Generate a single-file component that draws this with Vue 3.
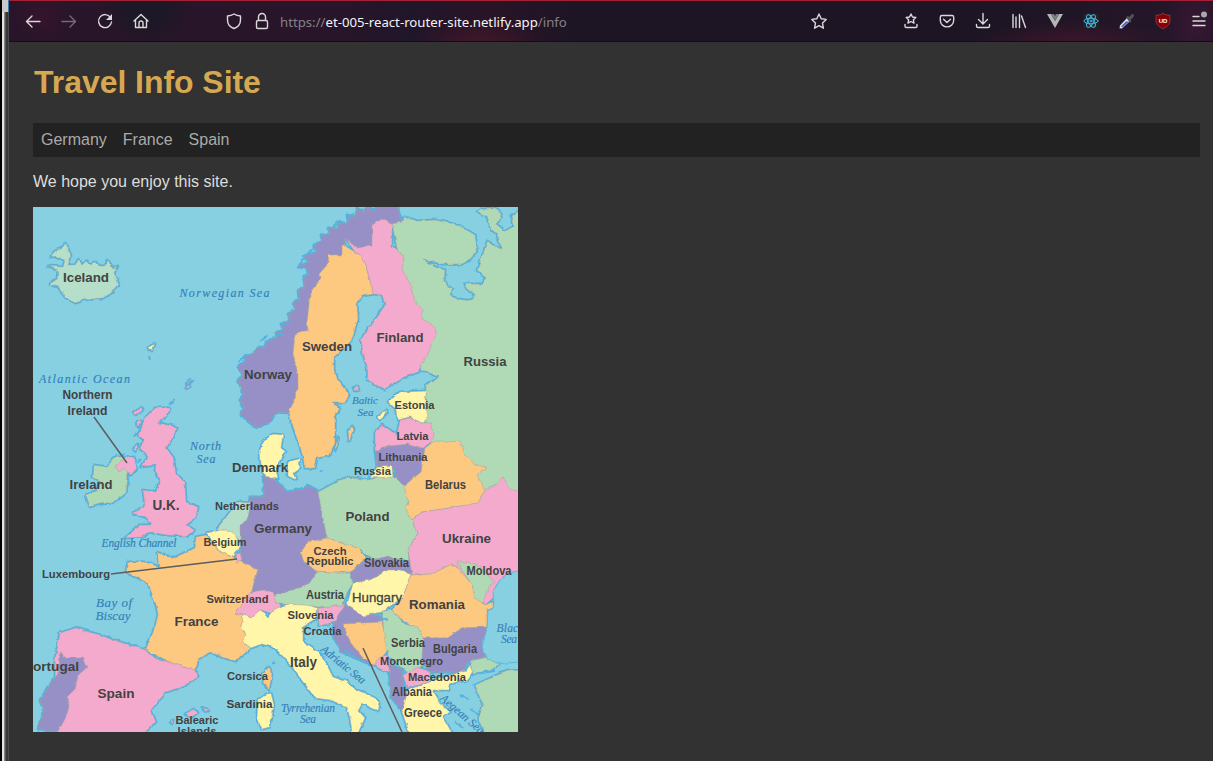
<script setup>
const sea = '#87d0e2'
const green = '#afdab5'
const mint = '#b5dfc8'
const pink = '#f3aacc'
const violet = '#9690c7'
const orange = '#fdc981'
const yellow = '#fff6aa'

const lands = [
  { c: green, p: '392,224 392,220 403,221 404,217 418,221 435,220 450,223 462,227 475,235 477,247 472,259 462,264 442,264 422,259 435,267 445,270 444,282 452,290 450,296 458,299 472,301 475,294 467,290 465,284 482,284 487,278 477,270 482,257 487,242 502,250 497,234 492,230 487,217 477,212 480,209 498,209 502,217 496,224 505,231 514,227 512,215 524,208 524,500 460,510 425,430 426,385 440,377 422,370' },
  { c: violet, p: '398,200 398,210 402,222 392,224 380,220 373,228 372,246 357,248 346,239 342,255 329,255 328,264 319,274 320,279 310,295 307,322 308,330 295,335 293,354 298,374 298,390 289,413 278,412 266,425 255,427 241,415 244,408 240,400 244,395 241,387 238,380 243,375 238,367 246,361 244,357 254,354 258,348 265,347 266,342 278,337 276,333 284,330 281,324 290,320 288,314 295,310 294,303 300,300 299,291 305,286 303,278 309,274 308,268 298,267 309,262 304,256 318,252 314,245 323,241 321,235 331,234 328,228 339,229 338,222 348,224 347,215 355,217 358,208 364,213 368,206 375,212 379,200' },
  { c: orange, p: '342,244 342,255 329,255 328,264 319,274 320,279 310,295 307,322 308,330 295,335 293,354 298,374 298,390 289,413 295,433 302,453 305,468 315,468 317,458 330,455 335,443 335,417 340,408 332,403 345,403 349,395 338,380 334,370 334,357 345,347 352,340 358,319 357,304 362,296 374,294 369,277 363,259 355,252' },
  { c: pink, p: '382,219 392,224 392,246 404,257 402,270 412,287 413,299 423,310 422,318 435,327 436,334 428,354 418,372 405,377 395,383 385,389 376,385 368,380 367,366 363,354 361,340 375,320 385,305 382,295 374,294 369,277 363,259 355,252 346,239 357,248 372,246 372,225' },
  { c: mint, p: '65,244 68,248 71,257 68,265 75,265 79,259 82,265 86,261 91,266 94,262 100,266 105,266 108,260 113,269 118,266 114,273 119,284 113,292 103,298 83,300 75,303 65,297 58,287 50,284 57,279 58,270 48,266 63,267 65,260 51,256 55,251 61,249' },
  { c: pink, p: '155,408 170,408 168,414 158,423 177,427 174,436 166,448 173,457 176,473 185,483 186,502 198,507 196,518 186,525 195,530 188,536 166,535 150,532 143,537 125,538 140,525 151,525 147,518 133,513 145,507 143,490 156,492 160,480 155,470 156,465 141,467 148,457 140,448 144,440 138,435 146,417' },
  { c: green, p: '113,458 123,455 128,477 126,493 113,503 100,504 90,507 86,495 96,491 101,482 93,477 94,465 108,467' },
  { c: pink, p: '115,467 125,458 134,457 137,468 131,475 123,468 120,472' },
  { c: yellow, p: '264,440 274,434 283,435 281,448 286,452 280,460 276,470 278,479 266,478 261,465 260,450' },
  { c: yellow, p: '288,462 299,459 300,468 293,473 296,480 288,476' },
  { c: violet, p: '263,477 275,480 287,492 298,490 310,486 318,492 322,513 327,538 308,542 301,552 303,558 317,572 308,585 297,593 275,595 251,592 258,570 241,562 240,537 240,527 248,517 250,497 265,497' },
  { c: mint, p: '216,530 230,512 238,502 251,503 248,517 240,527 240,540 228,531' },
  { c: yellow, p: '206,533 222,530 233,532 240,543 237,552 233,557 220,552' },
  { c: orange, p: '196,537 206,535 220,552 233,557 241,562 258,570 251,592 246,600 235,613 243,615 241,627 246,635 243,642 251,648 236,661 225,658 210,652 198,660 196,670 183,667 170,662 146,650 155,627 158,615 156,605 148,583 126,572 128,562 145,562 160,567 158,552 167,557 176,557 195,548' },
  { c: pink, p: '236,555 240,553 242,560 237,563' },
  { c: pink, p: '60,633 76,628 100,635 120,642 146,650 157,660 170,662 183,667 196,670 198,677 183,687 166,692 151,710 156,722 142,735 56,735 55,660' },
  { c: violet, p: '60,653 66,658 83,658 88,667 78,675 75,690 68,697 69,707 66,717 58,732 38,729 44,712 40,700 50,685 59,672' },
  { c: pink, p: '251,592 264,590 273,592 276,600 281,607 270,613 261,610 252,618 243,615 235,613' },
  { c: yellow, p: '243,615 252,618 261,610 268,618 275,609 285,605 298,601 318,608 316,619 303,627 303,642 322,655 333,677 348,682 353,688 375,698 380,703 378,711 362,703 358,710 365,718 357,735 352,733 350,718 347,708 330,700 315,698 300,678 290,664 275,648 262,644 251,648 243,642 246,635 241,627' },
  { c: green, p: '274,596 308,585 317,572 333,573 350,573 353,583 347,593 343,605 325,608 305,605 276,604' },
  { c: pink, p: '318,608 330,607 345,605 343,615 335,622 319,626' },
  { c: violet, p: '345,605 363,614 380,616 383,624 343,623 350,642 375,666 358,659 342,652 332,634 335,622' },
  { c: orange, p: '343,624 382,622 385,635 388,650 375,666 362,657 350,642' },
  { c: orange, p: '301,552 308,542 327,538 342,543 356,544 366,558 350,572 333,573 317,572 303,560' },
  { c: green, p: '318,492 333,484 347,477 367,480 382,477 402,477 405,485 409,503 412,520 418,533 408,550 409,560 388,558 372,559 360,549 342,543 327,538 322,513' },
  { c: violet, p: '350,573 366,560 375,560 388,556 400,562 410,560 412,575 400,570 388,570 370,580 357,585' },
  { c: yellow, p: '353,583 370,580 388,570 400,570 412,575 402,598 382,612 363,616 347,605' },
  { c: yellow, p: '370,478 377,467 392,466 393,477' },
  { c: violet, p: '375,450 390,446 408,444 425,448 421,472 404,486 397,479 392,466 377,467' },
  { c: pink, p: '375,433 382,425 390,430 397,435 400,420 410,418 422,423 432,423 433,440 422,449 408,444 390,446 375,451' },
  { c: yellow, p: '388,402 400,392 427,391 425,400 428,418 422,423 410,417 398,420 397,410' },
  { c: orange, p: '433,442 447,442 460,441 465,455 475,464 487,468 477,475 485,490 478,503 450,508 422,512 412,520 405,507 409,503 404,486 421,472 425,448' },
  { c: pink, p: '412,520 422,512 450,508 478,503 485,490 496,485 503,477 508,486 512,491 524,492 524,574 508,573 500,580 493,598 485,605 472,585 457,567 452,564 432,574 412,575 408,550 418,533' },
  { c: green, p: '457,562 468,562 482,568 495,583 488,588 482,605 475,598 472,585' },
  { c: orange, p: '412,575 432,574 452,564 459,569 472,585 475,598 485,605 493,602 493,608 487,610 487,628 462,628 448,638 423,638 413,627 400,618 392,610 402,598' },
  { c: green, p: '382,611 392,610 405,624 418,628 423,638 425,648 422,667 408,673 388,655 384,635' },
  { c: violet, p: '423,638 448,638 462,628 487,627 482,647 485,657 468,662 462,672 430,672 422,660' },
  { c: pink, p: '378,658 387,655 391,662 388,673 375,666' },
  { c: violet, p: '389,664 402,670 403,685 407,695 402,711 392,698 390,682' },
  { c: pink, p: '403,675 418,667 430,672 430,682 407,688' },
  { c: yellow, p: '408,690 430,682 450,675 466,671 470,665 474,671 468,680 448,684 450,690 432,690 440,703 450,712 443,717 452,733 410,735 402,712' },
  { c: green, p: '470,661 488,657 500,663 490,671 474,674' },
  { c: green, p: '475,685 495,676 508,671 524,670 524,738 487,738 478,719 483,706' },
  { c: orange, p: '262,674 269,667 272,675 269,690 264,683' },
  { c: yellow, p: '258,699 271,693 274,705 270,727 262,729 257,717' },
  { c: pink, p: '185,714 194,709 198,713 191,718' },
  { c: pink, p: '202,708 207,709 209,712 204,711' },
  { c: pink, p: '170,722 173,720 172,724' },
  { c: pink, p: '134,413 141,407 143,410 136,415' },
  { c: pink, p: '136,422 141,421 138,427' },
  { c: pink, p: '133,448 138,444 136,451' },
  { c: pink, p: '186,389 189,380 190,387' },
  { c: pink, p: '354,388 357,386 359,390 356,391' },
  { c: orange, p: '348,432 352,426 354,430 349,441' },
  { c: yellow, p: '335,450 338,437 337,447' },
  { c: yellow, p: '378,417 387,410 386,415 380,420' },
  { c: yellow, p: '148,348 155,344 152,351' }
]

const blackSea = '524,570 508,573 500,580 493,592 494,603 493,608 488,611 487,628 482,647 488,660 505,664 524,661'

const countries = [
  ['Iceland', 86, 282, 13, 46],
  ['Norway', 268, 379, 13, 48],
  ['Sweden', 327, 351, 13, 50],
  ['Finland', 400, 342, 13, 47],
  ['Russia', 485, 366, 13, 43],
  ['Northern', 87.5, 399, 12.5, 50],
  ['Ireland', 87.5, 414.5, 12.5, 40],
  ['Ireland', 91, 488.5, 13, 43],
  ['U.K.', 166, 510, 14, 27],
  ['Denmark', 260, 472, 13, 56],
  ['Estonia', 414.5, 409, 11, 40],
  ['Latvia', 412.5, 440, 11, 32],
  ['Lithuania', 403, 460.5, 11, 49],
  ['Russia', 372.5, 475, 11, 37],
  ['Belarus', 445.5, 489, 12, 41],
  ['Poland', 367.5, 521, 13.5, 44],
  ['Ukraine', 466.5, 543, 13.5, 49],
  ['Netherlands', 247, 509.5, 11, 64],
  ['Germany', 283, 533, 13, 58],
  ['Belgium', 225, 545.5, 11.5, 43],
  ['Czech', 330, 555, 11, 33],
  ['Republic', 330, 565, 11, 47],
  ['Slovakia', 386.5, 567, 12, 45],
  ['Luxembourg', 76, 577.5, 11.5, 68],
  ['Switzerland', 237.5, 602.5, 11.5, 62],
  ['France', 196.5, 626, 13.5, 44],
  ['Austria', 325, 598.5, 12, 38],
  ['Romania', 437, 608.5, 13.5, 56],
  ['Moldova', 489, 575, 12, 45],
  ['Slovenia', 310.5, 619, 11.5, 46],
  ['Croatia', 322.5, 635, 11.5, 38],
  ['Serbia', 408, 647, 12, 34],
  ['Bulgaria', 455, 653, 12, 44],
  ['Montenegro', 411.5, 665, 11.5, 63],
  ['Macedonia', 437, 680.5, 11.5, 58],
  ['Albania', 412, 696, 12, 40],
  ['Greece', 423, 716.5, 12, 38],
  ['Italy', 303.5, 667, 14, 27],
  ['Spain', 116, 697.5, 13, 37],
  ['Portugal', 51.5, 671, 13, 55],
  ['Corsica', 247.5, 680, 11.5, 41],
  ['Sardinia', 249.5, 707.5, 11.5, 46],
  ['Balearic', 197, 724, 11.5, 43],
  ['Islands', 197, 735, 11.5, 39]
]

const waters = [
  ['Norwegian Sea', 224.5, 297, 12, 90],
  ['Atlantic Ocean', 84.5, 383, 12, 91],
  ['North', 205.5, 449.5, 12, 31],
  ['Sea', 206, 462.5, 12, 19],
  ['Baltic', 365, 404, 11, 26],
  ['Sea', 365.5, 415.5, 11, 16],
  ['English Channel', 139, 546.5, 11.5, 75],
  ['Bay of', 114, 607, 13, 36],
  ['Biscay', 113, 620, 13, 35],
  ['Tyrrehenian', 308, 712, 11.5, 54],
  ['Sea', 308, 722.5, 11.5, 16],
  ['Black', 510, 632, 11.5, 27],
  ['Sea', 509, 643, 11.5, 16]
]
</script>

<template>
  <div class="window">
    <div class="frame"></div>
    <div class="browser">
      <header class="toolbar">
        <span class="btn"><svg viewBox="0 0 20 20"><path d="M17 10.5H4M9 5l-5.500 5.500L9 16" /></svg></span>
        <span class="btn dim"><svg viewBox="0 0 20 20"><path d="M3 10.500h13M11 5l5.500 5.500L11 16" /></svg></span>
        <span class="btn"><svg viewBox="0 0 20 20"><path d="M15.500 6.500A6.500 6.500 0 1 0 16.500 11" /><path class="solid" d="M17 3v6h-6z" /></svg></span>
        <span class="btn"><svg viewBox="0 0 20 20"><path d="M3 10l7-6.500L17 10M4.500 9v7.500h11V9M8 16v-4a2 2 0 0 1 4 0v4" /></svg></span>
        <span class="btn security shield"><svg viewBox="0 0 20 20"><path d="M10 3c2 1.200 4 1.800 6.500 2v4c0 4-3 7.200-6.500 8.500C6.500 16.200 3.500 13 3.500 9V5C6 4.800 8 4.200 10 3z" /></svg></span>
        <span class="btn security"><svg viewBox="0 0 20 20"><rect x="4.500" y="9.500" width="11" height="8" rx="1.500" /><path d="M6.500 9V6a3.500 3.500 0 0 1 7 0v3" /></svg></span>
        <div class="url">https://<b>et-005-react-router-site.netlify.app</b>/info</div>
        <span class="btn"><svg viewBox="0 0 20 20"><path d="M10 3l2.200 4.700 5 .7-3.700 3.600.9 5.200-4.400-2.500-4.400 2.500.9-5.200-3.700-3.600 5-.7z" /></svg></span>
        <div class="tools">
          <span class="btn"><svg viewBox="0 0 20 20"><path d="M10 3l1.500 3 3.300.500-2.400 2.300.6 3.300-3-1.600-3 1.600.6-3.300-2.400-2.300 3.300-.5zM4 13.500v1.800q0 1.200 1.200 1.200h9.600q1.200 0 1.200-1.200v-1.800" /></svg></span>
          <span class="btn"><svg viewBox="0 0 20 20"><path d="M5 4.500h10q1.700 0 1.700 1.700v3a6.700 6.700 0 0 1-13.400 0v-3q0-1.700 1.700-1.700zM6.500 8.300l3.500 3.200 3.500-3.200" /></svg></span>
          <span class="btn"><svg viewBox="0 0 20 20"><path d="M10 2.500v10M5.500 8.500l4.500 4.500 4.500-4.500M3.500 13.500v1.500q0 1.500 1.500 1.500h10q1.500 0 1.500-1.500v-1.500" /></svg></span>
          <span class="btn"><svg viewBox="0 0 20 20"><path d="M4 3.500v13M7 6v10.500M10.500 3.500v13M12.500 5l4 11.500" /></svg></span>
          <span class="btn"><svg viewBox="0 0 20 20" class="flat"><path fill="#b4b6b6" d="M2 3h4l4 7 4-7h4l-8 14z" /><path fill="#7b7d7d" d="M6 3h3l1 2 1-2h3l-4 7z" /></svg></span>
          <span class="btn"><svg viewBox="0 0 20 20" class="react"><rect x="2.500" y="2.500" width="15" height="15" rx="2" class="tile" /><g><ellipse cx="10" cy="10" rx="7" ry="2.800" /><ellipse cx="10" cy="10" rx="7" ry="2.800" transform="rotate(60 10 10)" /><ellipse cx="10" cy="10" rx="7" ry="2.800" transform="rotate(120 10 10)" /><circle cx="10" cy="10" r="1" /></g></svg></span>
          <span class="btn"><svg viewBox="0 0 20 20" class="flat"><path fill="#dedfe4" d="M10 7l3 3-8 7.500-2.500-.3.500-2.700z" /><path fill="#3d65dc" d="M9 10.500h3l-6.500 6-1.500-1z" /><path fill="#505158" d="M9 6l2-1 1 1 3-3q3 0 1.500 3l-3 3 1 1-1.500 2z" /></svg></span>
          <span class="btn"><svg viewBox="0 0 20 20" class="flat"><path fill="#850008" stroke="#a84048" stroke-width=".7" d="M10 2.500c2 1.200 4 1.700 7 1.700v5.300c0 4-3.500 6.500-7 8.500-3.500-2-7-4.500-7-8.500V4.200c3 0 5-.5 7-1.700z" /><text x="10" y="11.700">UD</text></svg></span>
          <span class="btn"><svg viewBox="0 0 20 20"><path d="M4 5.500h6M4 10h12M4 14.500h12" /><circle class="badge" cx="15" cy="3.500" r="3" /></svg></span>
        </div>
      </header>
      <main class="page">
        <h1>Travel Info Site</h1>
        <nav><a>Germany</a><a>France</a><a>Spain</a></nav>
        <p>We hope you enjoy this site.</p>
        <svg class="map" viewBox="33 207 485 525">
          <defs>
            <filter id="coast" filterUnits="userSpaceOnUse" x="15" y="190" width="520" height="560">
              <feTurbulence type="fractalNoise" baseFrequency=".16" numOctaves="2" seed="4" result="noise" />
              <feDisplacementMap in="SourceGraphic" in2="noise" scale="5" xChannelSelector="R" yChannelSelector="G" color-interpolation-filters="sRGB" />
              <feGaussianBlur stdDeviation=".3" />
            </filter>
          </defs>
          <rect x="33" y="207" width="485" height="525" :fill="sea" />
          <g filter="url(#coast)">
            <g transform="translate(1 1)">
              <polygon v-for="(l, i) in lands" :key="'s' + i" class="shore" :points="l.p" />
              <polygon v-for="(l, i) in lands" :key="'l' + i" class="land" :points="l.p" :fill="l.c" />
              <polygon class="inland-sea" :points="blackSea" :fill="sea" />
              <path class="isles" d="M239 362l5-5M260 342l7-6M276 337l8-3M283 326l7-4M298 266l8-8M307 254l9-7M333 227l7-5M349 220l4-7M138 433l-5 4M170 405l5-6M141 459l-3 4M187 386l7-6M149 356l1 4M273 662l2 2M320 471l3 1M484 672l12-1M460 695l9 4M470 709l10 6M455 722l9 6M345 650l18 12M378 616l10 4" />
            </g>
          </g>
          <path class="leader" d="M94 417l33 46M111 574l126-15M363 648l39 84" />
          <text v-for="(t, i) in countries" :key="'c' + i" class="country" :x="t[1]" :y="t[2]" :font-size="t[3]" :textLength="t[4]" lengthAdjust="spacingAndGlyphs">{{ t[0] }}</text>
          <text x="377" y="601.500" class="country plain" font-size="13" textLength="50" lengthAdjust="spacingAndGlyphs">Hungary</text>
          <text v-for="(t, i) in waters" :key="'w' + i" class="water" :x="t[1]" :y="t[2]" :font-size="t[3]" :textLength="t[4]">{{ t[0] }}</text>
          <text class="water" font-size="11.500" textLength="54" transform="translate(341 667.500) rotate(39)">Adriatic Sea</text>
          <text class="water" font-size="11.500" textLength="54" transform="translate(460 717) rotate(41)">Aegean Sea</text>
        </svg>
      </main>
    </div>
  </div>
</template>

<style>
body {
  background: #323232;
  overflow: hidden;
}
</style>

<style scoped>
.window {
  display: flex;
  height: 761px;
  background: #323232;
  font-family: "Liberation Sans", Arial, sans-serif;
}
.frame {
  width: 9px;
  flex: none;
  background:
    linear-gradient(90deg, #000 2px, #c9c9c9 2px 8px, #397caf 8px) 0 0 / 9px 12px no-repeat,
    linear-gradient(90deg, #000 2px, #e2e2e2 2px 4px, #858585 4px 5px, #555 5px 6px, #373737 6px 8px, #4b4b4b 8px);
}
.browser {
  flex: 1;
  min-width: 0;
}
.toolbar {
  box-sizing: border-box;
  height: 42px;
  display: flex;
  align-items: center;
  padding-left: 6px;
  overflow: hidden;
  border-top: 1px solid #a52032;
  border-bottom: 1px solid #130b19;
  background:
    radial-gradient(ellipse 30px 28px at 34px 15px, #35142c, transparent),
    radial-gradient(ellipse 45px 36px at 138px 8px, #1d1825 40%, transparent),
    radial-gradient(ellipse 65px 24px at 470px 42px, #421629, transparent),
    radial-gradient(ellipse 100px 24px at 1065px 43px, #3f152a, transparent),
    radial-gradient(ellipse 30px 45px at 1185px 24px, #381733, transparent),
    linear-gradient(90deg, #281529 0 330px, #20162a 400px, #291426 480px, #1d1524 570px 1000px, #26162a);
}
.btn {
  width: 36px;
  flex: none;
  display: flex;
  justify-content: center;
}
.btn svg {
  width: 20px;
  height: 20px;
  fill: none;
  stroke: #dbd8dc;
  stroke-width: 1.4;
  stroke-linecap: round;
  stroke-linejoin: round;
}
.btn.dim svg {
  stroke: #756a78;
}
.btn .solid {
  fill: #dbd8dc;
  stroke: none;
}
.security {
  width: 28px;
}
.shield {
  margin-left: 61px;
}
.btn .flat {
  stroke: none;
}
.flat text {
  font: bold 6px "Liberation Sans", sans-serif;
  fill: #fff;
  text-anchor: middle;
}
.btn .react {
  stroke: #4ab8e0;
  stroke-width: 1;
}
.react .tile {
  fill: #202527;
  stroke: none;
}
.badge {
  fill: #aaa6ae;
  stroke: none;
}
.url {
  flex: none;
  width: 521px;
  margin-left: 4px;
  padding-top: 2px;
  font: 13.2px/20px "Noto Sans", sans-serif;
  color: #858089;
  white-space: nowrap;
}
.url b {
  font-weight: 400;
  color: #f6f3f7;
}
.tools {
  flex: none;
  display: flex;
  margin-left: 56px;
}
.page {
  padding: 22px 13px 0 24px;
  color: #ddd;
}
h1 {
  margin: 0 0 22px;
  color: #d5a851;
  font-size: 32px;
  line-height: 37px;
  letter-spacing: -.05px;
  padding-left: 1px;
}
nav {
  display: flex;
  gap: 16px;
  height: 34px;
  padding: 0 8px;
  background: #222;
  color: #aaa;
  font-size: 16px;
  line-height: 33px;
}
p {
  margin: 15px 0 16px;
  font-size: 16px;
  line-height: 19px;
}
.map {
  display: block;
  width: 485px;
  height: 525px;
  overflow: hidden;
}
.shore {
  fill: none;
  stroke: #4fb2e0;
  stroke-width: 3;
  stroke-linejoin: round;
}
.land {
  stroke: #a9a19b;
  stroke-width: .5;
}
.inland-sea {
  stroke: #5db8df;
  stroke-width: 1;
}
.isles {
  fill: none;
  stroke: #58b2dc;
  stroke-width: 2;
}
.leader {
  fill: none;
  stroke: #5d5d5d;
  stroke-width: 1.5;
}
.country {
  fill: #424242;
  font-family: "Liberation Sans", Arial, sans-serif;
  font-weight: bold;
  text-anchor: middle;
}
.plain {
  font-weight: normal;
  stroke: #424242;
  stroke-width: .3;
}
.water {
  fill: #347fb9;
  font-family: "Liberation Serif", serif;
  font-style: italic;
  text-anchor: middle;
  stroke: #347fb9;
  stroke-width: .15;
}
</style>
